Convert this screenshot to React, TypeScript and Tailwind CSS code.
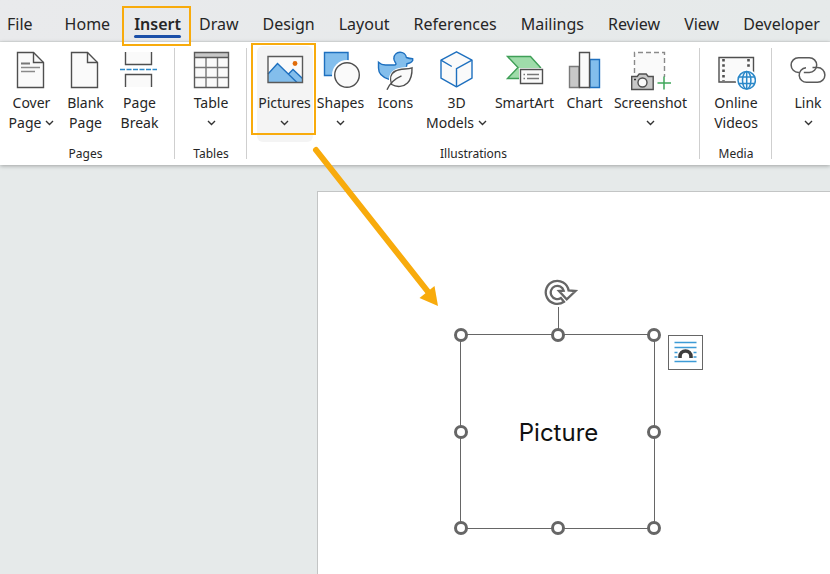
import React from 'react'

const tabs = ['Home', 'Insert', 'Draw', 'Design', 'Layout', 'References', 'Mailings', 'Review', 'View', 'Developer']

const Icon: React.FC<{ children: React.ReactNode }> = ({ children }) => (
  <svg width="40" height="44" viewBox="0 0 40 44" fill="none" strokeWidth="1.4" className="shrink-0" aria-hidden="true">
    {children}
  </svg>
)

const Chevron = () => (
  <svg width="9" height="6" viewBox="0 0 9 6" fill="none" stroke="#333" strokeWidth="1.4" className="shrink-0" aria-hidden="true">
    <path d="M1 1l3.5 3.500L8 1" />
  </svg>
)

const CoverPageIcon = () => (
  <Icon>
    <path d="M5.500 3.500h16l10 10v25h-26z" fill="#fafafa" stroke="#4f4f4f" />
    <path d="M21.500 3.500v10h10" stroke="#4f4f4f" />
    <path d="M9 14.500h9" stroke="#777" strokeWidth="2" />
    <path d="M9 18.500h19M9 22.500h14" stroke="#8a8a8a" />
  </Icon>
)

const BlankPageIcon = () => (
  <Icon>
    <path d="M5.500 3.500h16l10 10v25h-26z" fill="#fafafa" stroke="#4f4f4f" />
    <path d="M21.500 3.500v10h10" stroke="#4f4f4f" />
  </Icon>
)

const PageBreakIcon = () => (
  <Icon>
    <path d="M5.500 3v12.500h26V3M5.500 38V25.500h26V38" fill="#fafafa" stroke="#4f4f4f" />
    <path d="M0 20.500h37" stroke="#2b88c8" strokeDasharray="5 1.500" />
  </Icon>
)

const TableIcon = () => (
  <Icon>
    <path d="M3.500 3.500h34v35h-34z" fill="#fafafa" />
    <path d="M3.500 3.500h34v5h-34z" fill="#c8c8c8" />
    <path d="M3.500 18.500h34M3.500 28.500h34M15 8.500v30M26.500 8.500v30" stroke="#777" />
    <path d="M3.500 3.500h34v35h-34zM3.500 8.500h34" stroke="#5a5a5a" />
  </Icon>
)

const PicturesIcon = () => (
  <Icon>
    <path d="M3 7.500h34.500v26H3z" fill="#fafafa" />
    <path d="M3 25l9.500-10.500L32 33.500H3z" fill="#83beec" />
    <path d="M23.500 25l4.500-4.500 9.500 9v4H32z" fill="#83beec" />
    <path d="M3 25l9.500-10.500L32 33.500M23.500 25l4.500-4.500 9.500 9" stroke="#1e70bf" />
    <path d="M3 7.500h34.500v26H3z" stroke="#5a5a5a" />
    <circle cx="30" cy="14.500" r="2.400" fill="#e06c0a" />
  </Icon>
)

const ShapesIcon = () => (
  <Icon>
    <path d="M3.500 3.500h23.500v23H3.500z" fill="#83beec" stroke="#1e70bf" />
    <circle cx="26" cy="26" r="15" fill="#fff" />
    <circle cx="26" cy="26" r="12.300" fill="#fafafa" stroke="#4f4f4f" />
  </Icon>
)

const DuckIcon = () => (
  <Icon>
    <path
      d="M2.500 13.300c2 1.900 4.500 2.700 7 2.700h8.500c2.200 0 2.500-1.300 1.200-2.800-1-1.200-1.500-2.500-1.300-4a6.300 6.300 0 0112.500-.7c2 .8 4 1.200 6.300 1.300v1.700c-1.200 2-3 3-5.700 3.200 0 3-1 5.800-3 8.300L13 30.300C7 28.500 2.500 25 2.500 19z"
      fill="#83beec"
      stroke="#1e70bf"
    />
    <path d="M38.500 16.500c-6 2-14 1-19.500 4-5.500 3-7 8.500-5.500 14l-5 7h9c7 .5 13-1 17-5.500 4.500-5.500 3.500-13 4-19.500z" fill="#fff" />
    <path d="M36 18.800c-5.500 1.700-11.500.8-16.500 3.200-5 2.500-6 8-3.800 13.500 5 3 11.800 2.500 15.800-1.500 4-4 4.700-9.500 4.500-15.200z" fill="#fafafa" stroke="#4f4f4f" />
    <path d="M11 40.800c2.500-6 7-10.800 14.500-14" stroke="#4f4f4f" />
  </Icon>
)

const CubeIcon = () => (
  <Icon>
    <path d="M19.500 2.800L35 11.200v18l-15.500 8.600L4 29.200v-18z" fill="#fafafa" stroke="#1e70bf" strokeLinejoin="round" />
    <path d="M4 11.200l10.800 6.300M35 11.200l-15.500 8.500v18" stroke="#1e70bf" />
  </Icon>
)

const SmartArtIcon = () => (
  <Icon>
    <path d="M2.500 7.500h23l10 11-10 11h-23l10.500-11z" fill="#9fdcaa" stroke="#3f9f57" />
    <path d="M14 19h25v17H14z" fill="#fff" />
    <path d="M15.500 20.500h22v14h-22z" fill="#fafafa" stroke="#4f4f4f" />
    <path d="M18.500 25.500h1.500M22 25.500h12M18.500 29.500h1.500M22 29.500h12" stroke="#777" />
  </Icon>
)

const ChartIcon = () => (
  <Icon>
    <path d="M4.500 17.500H14v21H4.500z" fill="#c8c8c8" stroke="#7a7a7a" />
    <path d="M25 10.500h9.500v28H25z" fill="#83beec" stroke="#1e70bf" />
    <path d="M14.500 3.500h10v35h-10z" fill="#fafafa" stroke="#4f4f4f" />
  </Icon>
)

const ScreenshotIcon = () => (
  <Icon>
    <path d="M3.500 3.500h30v30h-30z" fill="#fafafa" />
    <path d="M3.500 24V3.500h30V28" stroke="#8a8a8a" strokeDasharray="5 3" />
    <path d="M.7 27.500h5.500l2-2.500h7l2 2.500h5v13H.7z" fill="#c8c8c8" stroke="#4f4f4f" />
    <circle cx="11.500" cy="33.500" r="4.500" fill="#fafafa" stroke="#4f4f4f" />
    <path d="M3 30.500h2" stroke="#333" />
    <path d="M33 27.500v13M26.500 34h13.500" stroke="#3fa65b" strokeWidth="1.500" />
  </Icon>
)

const VideoIcon = () => (
  <Icon>
    <path d="M3 8.500h34.500v24.500H3z" fill="#fafafa" stroke="#4f4f4f" />
    <path d="M7.500 10v22M32.500 10v8" stroke="#4f4f4f" strokeWidth="2.600" strokeDasharray="2.500 2.800" />
    <circle cx="30.700" cy="31.300" r="11" fill="#fff" />
    <g stroke="#2b88c8" strokeWidth="1.500">
      <circle cx="30.700" cy="31.300" r="8.700" fill="#f4faff" />
      <ellipse cx="30.700" cy="31.300" rx="4.200" ry="8.700" />
      <path d="M30.700 22.500v17.500M23 28h15.500M23 34.500h15.500" />
    </g>
  </Icon>
)

const LinkIcon = () => (
  <Icon>
    <g stroke="#5a5a5a" strokeWidth="1.500">
      <path d="M11 23.500h-.5a7.300 7.300 0 010-14.800h10.800a7.300 7.300 0 010 14.800h-5.500" />
      <path d="M24.500 18.500h5a7.300 7.300 0 010 14.800H19a7.300 7.300 0 01-1-14.600" />
    </g>
  </Icon>
)

interface RibbonButtonProps {
  icon: React.ReactNode
  lines: string[]
  menu?: boolean
  width: string
  highlighted?: boolean
}

const RibbonButton: React.FC<RibbonButtonProps> = ({ icon, lines, menu, width, highlighted }) => (
  <button
    type="button"
    className={`relative flex h-24 shrink-0 flex-col items-center rounded-md pt-[3px] text-sm leading-5 whitespace-nowrap ${width} ${
      highlighted ? 'bg-[#f4f4f4]' : ''
    }`}
  >
    {icon}
    <span>{lines[0]}</span>
    {(lines[1] || menu) && (
      <span className="flex h-5 items-center gap-1">
        {lines[1]}
        {menu && <Chevron />}
      </span>
    )}
    {highlighted && <span className="absolute -top-[3px] -right-[3px] bottom-[7px] -left-1.5 border-2 border-[#f8ab0c]" />}
  </button>
)

const RibbonGroup: React.FC<{ label?: string; width: string; children: React.ReactNode }> = ({ label, width, children }) => (
  <section className={`relative flex shrink-0 flex-col items-center pt-1 ${width}`}>
    <div className="flex">{children}</div>
    <h2 className="text-xs leading-6">{label}</h2>
    <span className="absolute top-1.5 right-0 bottom-1.5 w-px bg-[#cfcfcf]" />
  </section>
)

const Handle: React.FC<{ position: string }> = ({ position }) => (
  <span className={`absolute size-3.5 -translate-x-1/2 -translate-y-1/2 rounded-full border-[3px] border-[#666] bg-white ${position}`} />
)

const SelectedPicture = () => (
  <div className="absolute top-[142px] left-[142px] flex size-[195px] items-center justify-center border border-[#666] pt-0.5 pl-0.5">
    <span className="font-['Inter',sans-serif] text-2xl text-[#111]">Picture</span>
    <span className="absolute bottom-full left-1/2 h-7 w-px bg-[#666]" />
    <svg width="36" height="28" viewBox="0 0 36 28" fill="none" className="absolute -top-14 left-[82px]" aria-hidden="true">
      <path
        d="M21 22.700A11.500 11.500 0 1125.600 11.500L32.500 12l-8.800 8.300L16 12l4.700-.3A6.600 6.600 0 1017.900 19z"
        fill="#fff"
        stroke="#666"
        strokeWidth="2.300"
      />
    </svg>
    <Handle position="top-0 left-0" />
    <Handle position="top-0 left-1/2" />
    <Handle position="top-0 left-full" />
    <Handle position="top-1/2 left-0" />
    <Handle position="top-1/2 left-full" />
    <Handle position="top-full left-0" />
    <Handle position="top-full left-1/2" />
    <Handle position="top-full left-full" />
    <button
      type="button"
      aria-label="Layout Options"
      className="absolute top-0 left-[207px] flex size-[35px] items-center justify-center border border-[#666] bg-white"
    >
      <svg width="24" height="24" viewBox="0 0 24 24" fill="none" aria-hidden="true">
        <path d="M.5 1.500h22M.5 6.500h22M.5 11.500h3M19.500 11.500h3M.5 16h3M19.500 16h3M.5 20.500h22" stroke="#3d9bd6" strokeWidth="1.700" />
        <path d="M6 17v-1.500a5.500 5.500 0 0111 0V17" stroke="#3d3d3d" strokeWidth="3.600" />
      </svg>
    </button>
  </div>
)

export default function App() {
  return (
    <div className="relative flex min-h-screen flex-col overflow-hidden bg-[#e6eaea] font-['Noto_Sans',sans-serif] text-[#262626]">
      <nav className="flex h-[42px] shrink-0 items-center gap-6 border-b border-[#dde0e0] bg-linear-to-r from-[#e9eaec] to-[#e6eaea] pt-1.5 pl-[7px] text-base">
        <button type="button" className="mr-2">File</button>
        {tabs.map((tab) =>
          tab === 'Insert' ? (
            <button type="button" key={tab} className="relative -mr-1.5 font-semibold">
              {tab}
              <span className="absolute inset-x-0 -bottom-0.5 h-[3px] rounded-full bg-[#1b4fa8]" />
              <span className="absolute -top-1.5 -right-2.5 -bottom-2.5 -left-3 z-10 border-2 border-[#f8ab0c]" />
            </button>
          ) : (
            <button type="button" key={tab}>{tab}</button>
          )
        )}
      </nav>

      <div className="flex h-[123px] shrink-0 bg-white shadow-[0_1px_4px_rgba(0,0,0,0.3)]">
        <RibbonGroup label="Pages" width="w-[175px] pr-1">
          <RibbonButton icon={<CoverPageIcon />} lines={['Cover', 'Page']} menu width="w-[54px]" />
          <RibbonButton icon={<BlankPageIcon />} lines={['Blank', 'Page']} width="w-[54px]" />
          <RibbonButton icon={<PageBreakIcon />} lines={['Page', 'Break']} width="w-[54px]" />
        </RibbonGroup>
        <RibbonGroup label="Tables" width="w-[72px]">
          <RibbonButton icon={<TableIcon />} lines={['Table']} menu width="w-[54px]" />
        </RibbonGroup>
        <RibbonGroup label="Illustrations" width="w-[453px]">
          <RibbonButton icon={<PicturesIcon />} lines={['Pictures']} menu width="w-14" highlighted />
          <RibbonButton icon={<ShapesIcon />} lines={['Shapes']} menu width="w-14" />
          <RibbonButton icon={<DuckIcon />} lines={['Icons']} width="w-[54px]" />
          <RibbonButton icon={<CubeIcon />} lines={['3D', 'Models']} menu width="w-[68px]" />
          <RibbonButton icon={<SmartArtIcon />} lines={['SmartArt']} width="w-[68px]" />
          <RibbonButton icon={<ChartIcon />} lines={['Chart']} width="w-[52px]" />
          <RibbonButton icon={<ScreenshotIcon />} lines={['Screenshot']} menu width="w-20" />
        </RibbonGroup>
        <RibbonGroup label="Media" width="w-[72px]">
          <RibbonButton icon={<VideoIcon />} lines={['Online', 'Videos']} width="w-[54px]" />
        </RibbonGroup>
        <RibbonGroup width="w-[72px]">
          <RibbonButton icon={<LinkIcon />} lines={['Link']} menu width="w-[54px]" />
        </RibbonGroup>
      </div>

      <main className="flex grow pt-[26px] pl-[317px]">
        <div className="relative grow border-t border-l border-[#c3c5c5] bg-white">
          <SelectedPicture />
        </div>
      </main>

      {/* Arrow from the Pictures button to the inserted picture */}
      <svg width="130" height="164" viewBox="0 0 130 164" className="absolute top-[145px] left-[311px]" aria-hidden="true">
        <path d="M5 5L118 148" stroke="#f8ab0c" strokeWidth="6" strokeLinecap="round" />
        <path d="M127 161l-3.500-20-15 12z" fill="#f8ab0c" />
      </svg>
    </div>
  )
}
